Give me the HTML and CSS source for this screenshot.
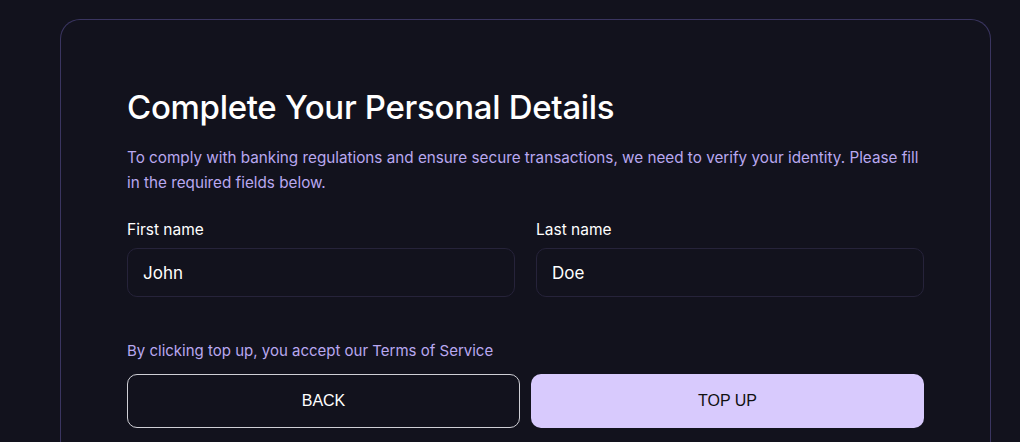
FILE: index.html
```html
<!DOCTYPE html>
<html lang="en">
<head>
<meta charset="utf-8">
<title>Complete Your Personal Details</title>
<link rel="stylesheet" href="styles.css">
</head>
<body>
<main class="card">
  <h1 class="title">Complete Your Personal Details</h1>
  <p class="lead">To comply with banking regulations and ensure secure transactions, we need to verify your identity. Please fill in the required fields below.</p>
  <div class="fields">
    <label class="field">
      <span class="label">First name</span>
      <input class="input" type="text" value="John">
    </label>
    <label class="field">
      <span class="label">Last name</span>
      <input class="input" type="text" value="Doe">
    </label>
  </div>
  <p class="terms">By clicking top up, you accept our Terms of Service</p>
  <div class="actions">
    <button class="btn btn-back" type="button">BACK</button>
    <button class="btn btn-primary" type="button">TOP UP</button>
  </div>
</main>
</body>
</html>
```
FILE: styles.css
```css
html, body {
  margin: 0;
  background: #12121d;
  height: 100%;
  overflow: hidden;
}
body {
  font-family: Inter, "Noto Sans", sans-serif;
  color: #ffffff;
  padding: 19px 29px 0 60px;
  box-sizing: border-box;
}
.card {
  border: 1px solid #3a3560;
  border-bottom: none;
  border-radius: 20px 20px 0 0;
  padding: 67px 66px 0 66px;
  height: 423px;
  box-sizing: border-box;
  overflow: hidden;
}
.title {
  margin: 0;
  font-size: 33px;
  font-weight: 500;
  line-height: 40px;
  letter-spacing: -0.3px;
}
.lead {
  margin: 18px 0 0 0;
  color: #b9a8f0;
  font-size: 15.25px;
  line-height: 25px;
}
.fields {
  display: grid;
  grid-template-columns: 1fr 1fr;
  column-gap: 21px;
  margin-top: 25px;
}
.field {
  display: flex;
  flex-direction: column;
}
.label {
  font-size: 15.5px;
  line-height: 20px;
  font-weight: 400;
  margin-bottom: 8px;
}
.input {
  height: 49px;
  box-sizing: border-box;
  border: 1px solid #26233a;
  border-radius: 10px;
  background: transparent;
  color: #ffffff;
  font-family: inherit;
  font-size: 17px;
  padding: 0 15px;
  outline: none;
}
.terms {
  margin: 43px 0 0 0;
  color: #b9a8f0;
  font-size: 15px;
  line-height: 22px;
}
.actions {
  display: grid;
  grid-template-columns: 1fr 1fr;
  column-gap: 11px;
  margin-top: 12px;
}
.btn {
  height: 54px;
  border-radius: 10px;
  font-family: "Liberation Sans", Arial, sans-serif;
  font-size: 16px;
  cursor: pointer;
}
.btn-back {
  background: transparent;
  color: #ffffff;
  border: 1px solid #cfcfd6;
}
.btn-primary {
  background: #d8cafd;
  color: #111111;
  border: none;
}
```
